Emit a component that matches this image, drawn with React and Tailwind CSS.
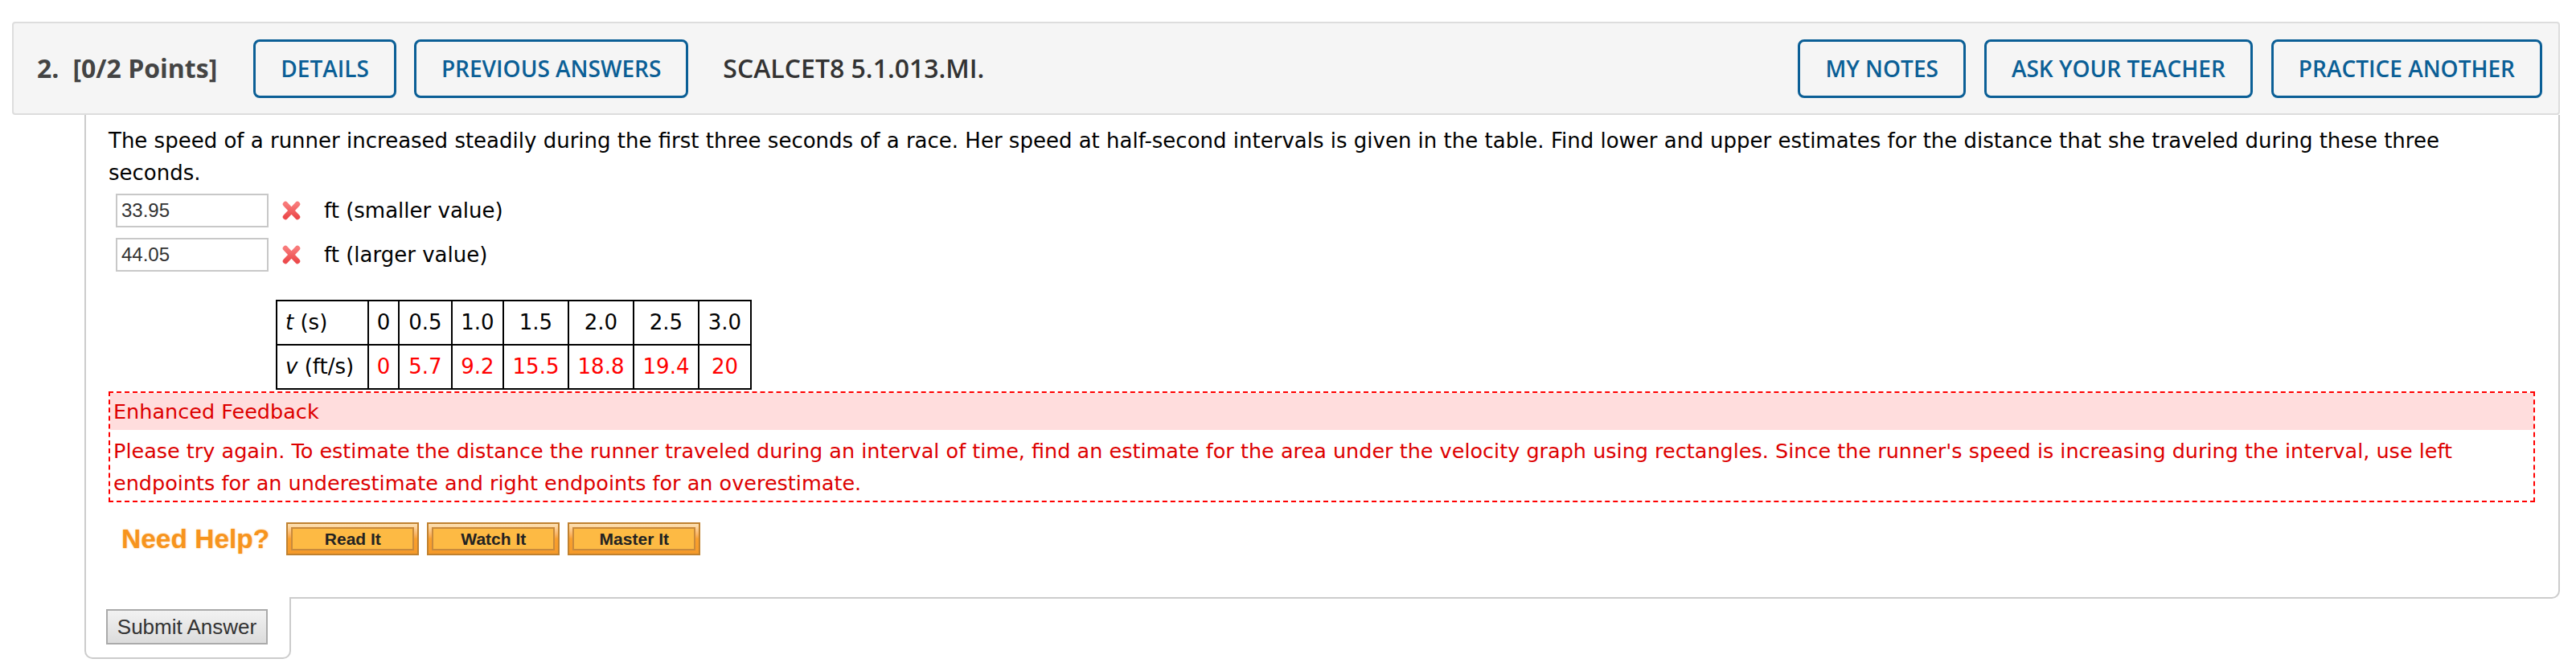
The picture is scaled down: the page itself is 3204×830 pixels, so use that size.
import React from "react";

const verdana = { fontFamily: '"DejaVu Sans", Verdana, sans-serif' };
const openSans = { fontFamily: '"Open Sans", "Liberation Sans", sans-serif' };
const arial = { fontFamily: '"Liberation Sans", Arial, sans-serif' };

function WrongMark() {
  return (
    <svg width="27" height="26" viewBox="0 0 27 26" className="shrink-0">
      <defs>
        <linearGradient id="xg" x1="0" y1="0" x2="0" y2="1">
          <stop offset="0" stopColor="#f87a7a" />
          <stop offset="1" stopColor="#ec4a4c" />
        </linearGradient>
      </defs>
      <path d="M6 5 L21 21 M21 5 L6 21" stroke="url(#xg)" strokeWidth="6.5" strokeLinecap="round" fill="none" />
    </svg>
  );
}

function HeadButton({ children }) {
  return (
    <button
      className="h-[73px] px-[31px] rounded-[8px] border-[3px] border-[#0b5f96] text-[#0b5f96] text-[28px] font-semibold uppercase leading-none"
      style={openSans}
    >
      {children}
    </button>
  );
}

function HelpButton({ children }) {
  return (
    <div className="w-[165px] h-[41px] border-2 border-[#c0812f] bg-gradient-to-b from-[#fde2b6] via-[#f9a02e] to-[#f59a2a] p-[4px]">
      <div
        className="h-full border-2 border-[#c98a3c] bg-[#fdba44] flex items-center justify-center text-[21px] font-bold text-[#222] leading-none"
        style={arial}
      >
        {children}
      </div>
    </div>
  );
}

const times = ["0", "0.5", "1.0", "1.5", "2.0", "2.5", "3.0"];
const speeds = ["0", "5.7", "9.2", "15.5", "18.8", "19.4", "20"];
const colW = ["w-[38px]", "w-[66px]", "w-[64px]", "w-[81px]", "w-[81px]", "w-[81px]", "w-[65px]"];

export default function App() {
  return (
    <div className="w-full h-[830px] bg-white pt-[27px] pl-[15px] pr-[20px]">
      {/* question header */}
      <div className="h-[116px] border-2 border-[#dddddd] rounded-[4px] bg-[#f5f5f5] flex items-center pl-[29px] pr-[20px]">
        <span className="text-[32px] font-bold text-[#444]" style={openSans}>2.</span>
        <span className="ml-[17px] text-[32px] font-bold text-[#444]" style={openSans}>[0/2 Points]</span>
        <div className="ml-[45px] flex gap-[22px]">
          <HeadButton>Details</HeadButton>
          <HeadButton>Previous Answers</HeadButton>
        </div>
        <span className="ml-[43px] text-[32px] font-semibold text-[#333]" style={openSans}>SCALCET8 5.1.013.MI.</span>
        <div className="ml-auto flex gap-[23px]">
          <HeadButton>My Notes</HeadButton>
          <HeadButton>Ask Your Teacher</HeadButton>
          <HeadButton>Practice Another</HeadButton>
        </div>
      </div>

      <div className="ml-[90px]">
        {/* question body */}
        <div className="border-l-2 border-r-2 border-b-2 border-[#cccccc] rounded-br-[10px] pt-[12px] pl-[28px] pr-[29px] pb-[52px]" style={verdana}>
          <p className="text-[26px] leading-[40px] text-black">
            The speed of a runner increased steadily during the first three seconds of a race. Her speed at half-second intervals is given in the table. Find lower and upper estimates for the distance that she traveled during these three seconds.
          </p>

          <div className="mt-[6px] ml-[9px] flex flex-col gap-[13px]">
            {[["33.95", "ft (smaller value)"], ["44.05", "ft (larger value)"]].map(([v, label]) => (
              <div key={v} className="flex items-center">
                <div className="w-[190px] h-[42px] border-2 border-[#c8c8c8] flex items-center pl-[5px] text-[24px] text-[#333]" style={arial}>
                  {v}
                </div>
                <div className="ml-[15px]"><WrongMark /></div>
                <span className="ml-[27px] text-[26px] text-black">{label}</span>
              </div>
            ))}
          </div>

          <table className="mt-[35px] ml-[208px] border-collapse border-2 border-black text-[26px]">
            <tbody>
              <tr className="h-[55px]">
                <td className="w-[114px] border-2 border-black pl-[10px] text-left"><i>t</i> (s)</td>
                {times.map((t, i) => (
                  <td key={i} className={`${colW[i]} border-2 border-black text-center`}>{t}</td>
                ))}
              </tr>
              <tr className="h-[55px]">
                <td className="border-2 border-black pl-[10px] text-left"><i>v</i> (ft/s)</td>
                {speeds.map((s, i) => (
                  <td key={i} className="border-2 border-black text-center text-[#ff0000]">{s}</td>
                ))}
              </tr>
            </tbody>
          </table>

          {/* feedback */}
          <div className="mt-[2px] border-2 border-dashed border-[#ff0000] text-[#dd0000] text-[25.5px]">
            <div className="h-[46px] leading-[46px] bg-[#ffdddd] pl-[4px]">Enhanced Feedback</div>
            <p className="mt-[6px] pl-[4px] pr-[10px] leading-[40px] pb-[2px]">
              Please try again. To estimate the distance the runner traveled during an interval of time, find an estimate for the area under the velocity graph using rectangles. Since the runner's speed is increasing during the interval, use left endpoints for an underestimate and right endpoints for an overestimate.
            </p>
          </div>

          <div className="mt-[25px] ml-[16px] flex items-center">
            <span className="text-[33.5px] leading-none font-bold text-[#f7941d] [text-shadow:0_0_2px_rgba(247,148,29,0.6)]" style={arial}>Need Help?</span>
            <div className="ml-[21px] flex gap-[10px]">
              <HelpButton>Read It</HelpButton>
              <HelpButton>Watch It</HelpButton>
              <HelpButton>Master It</HelpButton>
            </div>
          </div>
        </div>

        {/* submit tab */}
        <div className="-mt-[2px] w-[257px] h-[77px] bg-white border-l-2 border-r-2 border-b-2 border-[#cccccc] rounded-b-[10px] pt-[15px] pl-[25px]">
          <button
            className="w-[201px] h-[44px] border-2 border-[#aaaaaa] bg-gradient-to-b from-[#f2f2f2] to-[#dcdcdc] text-[26px] text-[#333] leading-none"
            style={arial}
          >
            Submit Answer
          </button>
        </div>
      </div>
    </div>
  );
}
